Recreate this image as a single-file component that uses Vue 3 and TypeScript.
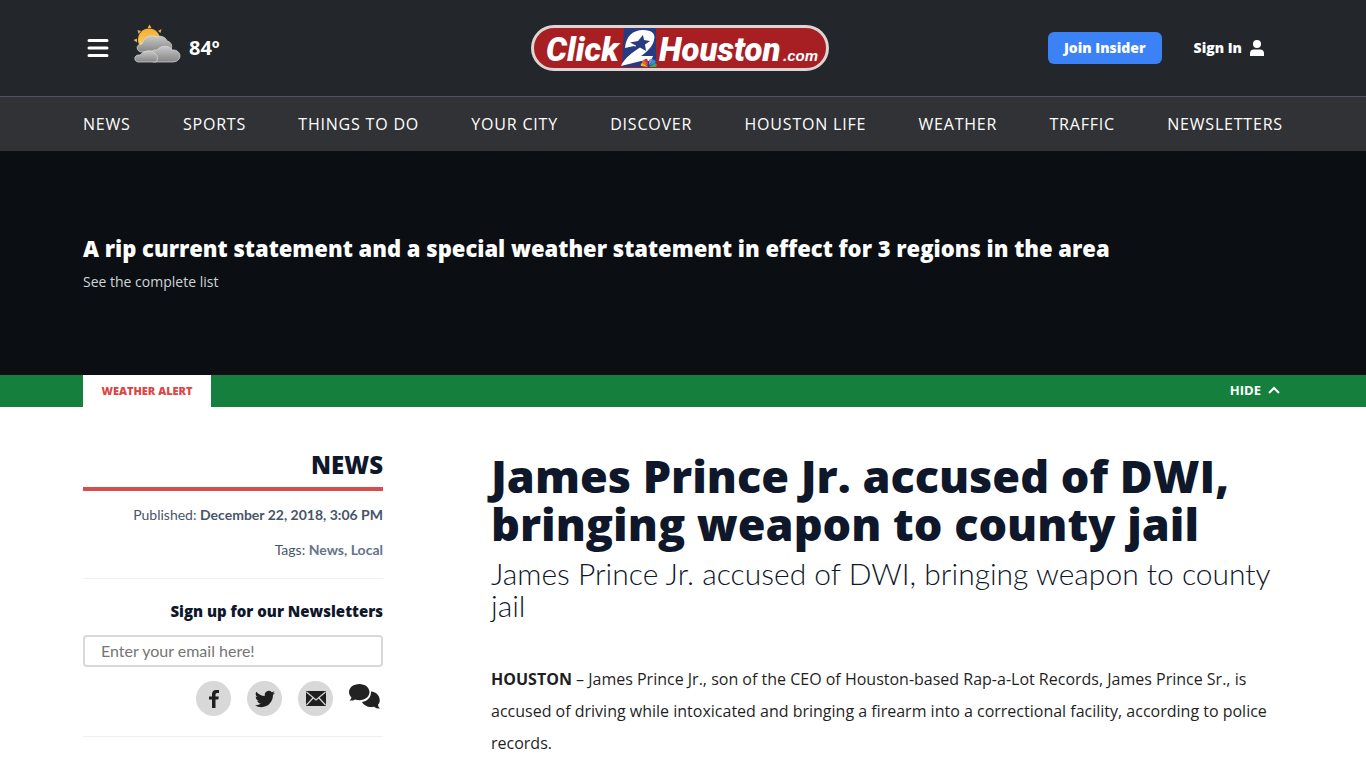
<script setup lang="ts">
import { ref } from 'vue'

const sections: string[] = [
  'NEWS',
  'SPORTS',
  'THINGS TO DO',
  'YOUR CITY',
  'DISCOVER',
  'HOUSTON LIFE',
  'WEATHER',
  'TRAFFIC',
  'NEWSLETTERS',
]
const tags: string[] = ['News', 'Local']
const email = ref('')
const alertOpen = ref(true)
</script>

<template>
  <div class="page">
    <header class="masthead">
      <div class="wrap masthead-row">
        <div class="masthead-left">
          <button class="menu" type="button" aria-label="Menu">
            <svg width="22" height="20" viewBox="0 0 22 20" stroke="#fff" stroke-width="3" stroke-linecap="round">
              <path d="M2 2.5H20M2 10H20M2 17.5H20" />
            </svg>
          </button>
          <a class="weather" href="#" aria-label="Current weather">
            <svg width="48" height="40" viewBox="0 0 48 40">
              <defs>
                <linearGradient id="sun" x1="0" y1="0" x2="0" y2="1">
                  <stop offset="0" stop-color="#f4ad35" />
                  <stop offset="1" stop-color="#fbd36b" />
                </linearGradient>
                <linearGradient id="cloud" x1="0" y1="0" x2="0" y2="1">
                  <stop offset="0" stop-color="#c9c9c9" />
                  <stop offset="1" stop-color="#858585" />
                </linearGradient>
              </defs>
              <path
                fill="#eab14a"
                d="M14.5 4L16.5 0.5L18.500 4ZM25 7L28.500 5L27.500 9ZM4.500 6L8 7L5.500 10ZM0.500 16L4 14.500L4 18.500ZM28 14L31 16L28 18Z"
              />
              <circle cx="16" cy="15.500" r="11" fill="url(#sun)" />
              <path
                fill="url(#cloud)"
                stroke="#dedede"
                stroke-width=".7"
                d="M9 28C3 28 2 20 9 20C11 13 18 10 24 13C27 11 33 13 34 17C39 18 40 23 37 28Z"
              />
              <path
                fill="url(#cloud)"
                stroke="#dedede"
                stroke-width=".7"
                d="M20 38C15 33 17 25 24 26C28 21 37 21 39 26C45 25 49 31 46 35Q44 38 40 38Z"
              />
              <path
                fill="url(#cloud)"
                stroke="#dedede"
                stroke-width=".7"
                d="M5 38C0 37 1 30 7 31C11 26 20 25 22 30C25 31 25 36 23 38Z"
              />
            </svg>
            <span>84º</span>
          </a>
        </div>

        <a class="logo" href="#" aria-label="Click2Houston.com">
          <svg width="300" height="48" viewBox="0 0 300 48">
            <rect x="2.500" y="2.500" width="295" height="43" rx="21.500" fill="#a71e23" stroke="#ddd5d4" stroke-width="3" />
            <path fill="#263b80" d="M94 4H126V43H92Z" />
            <g class="logo-type" fill="#fff">
              <text x="16" y="37" font-size="33">Click</text>
              <text x="129" y="37" font-size="33">Houston</text>
              <text class="logo-com" x="253" y="37" font-size="15">.com</text>
            </g>
            <path
              fill="#fff"
              d="M95 24C96 12 103 6 113 6C122 6 126 10 124 16C123 22 117 28 111 32H123L121 37L111 37L91 42C94 34 104 28 108 24L104 22Z"
            />
            <path
              fill="#263b80"
              d="M113 11L114 16L120 17L115 20.500L116 27L110 23.500L103 28L106 21.500L100 18.500L108 17Z"
            />
            <path fill="#f3b229" d="M118 43L111 42Q110 39 113 39Z" />
            <path fill="#e66a28" d="M118 42L112 39Q112 35 115 36Z" />
            <path fill="#d52d41" d="M118 41L114 36Q117 33 118 37Z" />
            <path fill="#9b7fc4" d="M119 41L119 36Q122 33 123 36Z" />
            <path fill="#2b9bd8" d="M119 42L123 36Q127 36 125 39Z" />
            <path fill="#36a857" d="M119 43L125 39Q128 40 126 43Z" />
          </svg>
        </a>

        <div class="masthead-right">
          <button class="join" type="button">Join Insider</button>
          <a class="signin" href="#">
            <span>Sign In</span>
            <svg width="14" height="16" viewBox="0 0 14 16" fill="#fff">
              <circle cx="7" cy="4" r="4" />
              <path d="M0 16V13.500Q0 9.500 4 9.500H10Q14 9.500 14 13.500V16Z" />
            </svg>
          </a>
        </div>
      </div>
    </header>

    <nav class="sections">
      <div class="wrap sections-row">
        <a v-for="s in sections" :key="s" href="#">{{ s }}</a>
      </div>
    </nav>

    <section class="alert">
      <div v-if="alertOpen" class="alert-body">
        <div class="wrap">
          <h2>A rip current statement and a special weather statement in effect for 3 regions in the area</h2>
          <a href="#">See the complete list</a>
        </div>
      </div>
      <div class="alert-bar">
        <div class="wrap alert-row">
          <span class="alert-tab">WEATHER ALERT</span>
          <button class="hide" type="button" @click="alertOpen = !alertOpen">
            HIDE
            <svg width="12" height="8" viewBox="0 0 12 8" fill="none" stroke="#fff" stroke-width="2">
              <path d="M1 7L6 2L11 7" />
            </svg>
          </button>
        </div>
      </div>
    </section>

    <main class="wrap content">
      <aside class="side">
        <h3 class="side-title">NEWS</h3>
        <p class="meta">Published: <strong>December 22, 2018, 3:06 PM</strong></p>
        <p class="meta tags">
          Tags:
          <template v-for="(t, i) in tags" :key="t"><a href="#">{{ t }}</a><b v-if="i < tags.length - 1">, </b></template>
        </p>
        <form class="signup" @submit.prevent>
          <label for="email">Sign up for our Newsletters</label>
          <input id="email" v-model="email" type="email" placeholder="Enter your email here!" />
        </form>
        <div class="share">
          <a class="round" href="#" aria-label="Facebook">
            <svg width="10" height="18" viewBox="0 0 10 18" fill="#1f1f1f">
              <path d="M3 18V9.500H0V6.500H3V4.500Q3 0 7 0H10V3H8Q6.500 3 6.500 4.500V6.500H9.800L9.300 9.500H6.500V18Z" />
            </svg>
          </a>
          <a class="round" href="#" aria-label="Twitter">
            <svg width="20" height="20" viewBox="0 0 24 24" fill="#1f1f1f">
              <path
                d="M23.950 4.570a10 10 0 0 1-2.820.770 4.960 4.960 0 0 0 2.160-2.720c-.950.550-2 .950-3.130 1.180a4.920 4.920 0 0 0-8.380 4.480C7.690 8.090 4.070 6.130 1.640 3.160a4.930 4.930 0 0 0 1.520 6.570 4.900 4.900 0 0 1-2.230-.610v.060a4.920 4.920 0 0 0 3.950 4.830 5 5 0 0 1-2.210.080 4.940 4.940 0 0 0 4.600 3.420A9.870 9.870 0 0 1 0 19.540a14 14 0 0 0 7.550 2.210c9.050 0 14-7.500 14-13.980 0-.210 0-.420-.020-.630a9.940 9.940 0 0 0 2.420-2.570Z"
              />
            </svg>
          </a>
          <a class="round" href="#" aria-label="Email">
            <svg width="20" height="15" viewBox="0 0 20 15">
              <rect width="20" height="15" rx="1" fill="#1f1f1f" />
              <path d="M0.500 1L10 9L19.500 1M0.500 14L7 7M19.500 14L13 7" fill="none" stroke="#d8d8d8" stroke-width="1.200" />
            </svg>
          </a>
          <a class="comments" href="#" aria-label="Comments">
            <svg width="31" height="25" viewBox="0 0 31 25" fill="#222">
              <path
                d="M10.500 0C4.500 0 0 3.600 0 8C0 10.200 1 12 2.500 13.400Q2 15.500 0.500 16.500Q4 17 6 15.400Q8 16.200 10.500 16.200C16 16.200 20.500 12.700 20.500 8C20.500 3.600 16 0 10.500 0Z"
              />
              <path
                d="M22 7.500C22.400 13 18.500 17.300 13 18C14.500 21.500 20 24 25 22.700Q28 25 31 24.500Q29 23 29 20.800C33 16.500 30 8 22 7.500Z"
              />
            </svg>
          </a>
        </div>
      </aside>

      <article class="story">
        <h1>James Prince Jr. accused of DWI, bringing weapon to county jail</h1>
        <p class="deck">James Prince Jr. accused of DWI, bringing weapon to county jail</p>
        <p class="body">
          <b>HOUSTON</b> – James Prince Jr., son of the CEO of Houston-based Rap-a-Lot Records, James Prince Sr., is
          accused of driving while intoxicated and bringing a firearm into a correctional facility, according to police
          records.
        </p>
      </article>
    </main>
  </div>
</template>

<style>
body {
  margin: 0;
  background: #fff;
}
</style>

<style scoped>
.page {
  font-family: "Open Sans", "Noto Sans", sans-serif;
  color: #0f172a;
}
.page *,
.page {
  box-sizing: border-box;
}
h1,
h2,
h3,
p {
  margin: 0;
}
a {
  color: inherit;
  text-decoration: none;
}
button {
  border: 0;
  padding: 0;
  background: none;
  color: #fff;
  font-family: inherit;
  cursor: pointer;
}
svg {
  display: block;
}
.wrap {
  max-width: 1200px;
  margin: 0 auto;
}

.masthead {
  background: #23262b;
  color: #fff;
  border-bottom: 1px solid #4b5263;
}
.masthead-row {
  display: grid;
  grid-template-columns: 1fr auto 1fr;
  align-items: center;
  height: 96px;
}
.masthead-left,
.masthead-right,
.weather,
.signin {
  display: flex;
  align-items: center;
}
.menu {
  margin: 0 24px 0 4px;
}
.weather {
  gap: 8px;
  padding-bottom: 8px;
  font-size: 20px;
  font-weight: 700;
}
.weather span {
  padding-top: 6px;
}
.logo {
  margin-right: 6px;
}
.logo-type {
  font-family: Roboto, "Liberation Sans", sans-serif;
  font-weight: 900;
  font-style: italic;
}
.logo-com {
  font-family: "Liberation Sans", sans-serif;
  font-weight: 700;
}
.masthead-right {
  justify-content: flex-end;
  gap: 32px;
  padding-right: 19px;
  font-size: 14px;
  font-weight: 800;
}
.join {
  height: 32px;
  padding: 0 16px 2px;
  border-radius: 6px;
  background: #3b82f6;
  font-size: 14px;
  font-weight: 800;
}
.signin {
  gap: 8px;
}
.signin span {
  padding-bottom: 2px;
}

.sections {
  background: #313235;
  color: #fff;
}
.sections-row {
  display: flex;
  justify-content: space-between;
  align-items: center;
  height: 54px;
  font-size: 16px;
  letter-spacing: 0.05em;
}

.alert-body {
  display: flex;
  min-height: 224px;
  align-items: center;
  background: #0b0e13;
  color: #fff;
}
.alert-body .wrap {
  width: 100%;
  padding-bottom: 2px;
}
.alert-body h2 {
  font-size: 22px;
  font-weight: 800;
  line-height: 32px;
  margin-bottom: 8px;
}
.alert-body a {
  display: block;
  font-size: 14px;
  line-height: 20px;
  color: #d1d5db;
}
.alert-bar {
  background: #15803d;
}
.alert-row {
  display: flex;
  justify-content: space-between;
  height: 32px;
}
.alert-tab {
  display: flex;
  align-items: center;
  justify-content: center;
  width: 128px;
  padding-bottom: 2px;
  background: #fff;
  color: #dc4545;
  font-size: 11px;
  font-weight: 800;
}
.hide {
  display: flex;
  align-items: center;
  gap: 7px;
  padding: 0 3px 2px 0;
  font-size: 13px;
  font-weight: 700;
}

.content {
  display: grid;
  grid-template-columns: 300px minmax(0, 1fr);
  column-gap: 108px;
  padding-top: 44px;
}
.side {
  text-align: right;
  font-family: Lato, sans-serif;
}
.side-title {
  padding: 0 0 8px;
  border-bottom: 4px solid #d94c4c;
  font-family: "Open Sans", sans-serif;
  font-size: 24px;
  font-weight: 800;
  line-height: 28px;
}
.meta {
  margin-top: 14px;
  font-size: 14px;
  line-height: 20px;
  color: #475569;
}
.meta + .meta {
  margin-top: 15px;
}
.tags {
  padding-bottom: 18px;
  border-bottom: 1px solid #f0f0f0;
}
.tags a,
.tags b {
  font-weight: 700;
  color: #64748b;
}
.signup {
  margin-top: 20px;
}
.signup label {
  display: block;
  font-family: "Open Sans", sans-serif;
  font-size: 15px;
  font-weight: 800;
  line-height: 24px;
}
.signup input {
  width: 100%;
  height: 32px;
  margin-top: 12px;
  padding: 0 16px 2px;
  border: 2px solid #d8d8d8;
  border-radius: 4px;
  background: #fff;
  font-family: Lato, sans-serif;
  font-size: 16px;
  color: #0f172a;
}
.signup input::placeholder {
  color: #757575;
  opacity: 1;
}
.share {
  display: flex;
  justify-content: flex-end;
  gap: 16px;
  padding: 14px 3px 20px 0;
  border-bottom: 1px solid #f0f0f0;
}
.round {
  display: flex;
  align-items: center;
  justify-content: center;
  width: 35px;
  height: 35px;
  border-radius: 50%;
  background: #d8d8d8;
}
.comments {
  padding-top: 3px;
}

.story h1 {
  padding-top: 1px;
  font-size: 45px;
  font-weight: 800;
  line-height: 48px;
}
.deck {
  margin-top: 9px;
  font-family: Lato, sans-serif;
  font-size: 30px;
  font-weight: 300;
  line-height: 32px;
}
.body {
  margin-top: 42px;
  font-size: 16px;
  line-height: 32px;
  color: #1f1f1f;
}
</style>
